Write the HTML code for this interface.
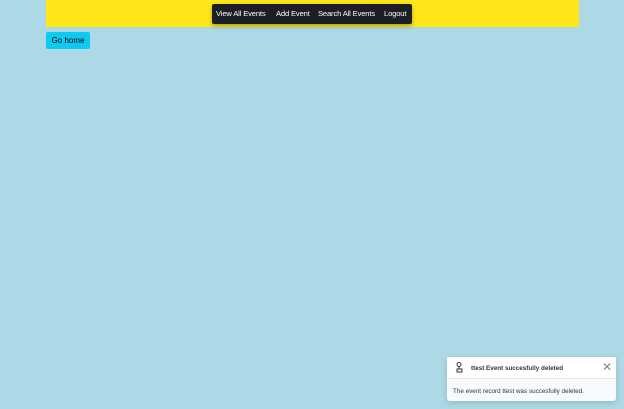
<!DOCTYPE html><html><head><style>
body{margin:0;width:624px;height:409px;background:#add8e6;font-family:"Liberation Sans",sans-serif;position:relative;overflow:hidden}
.bar{position:absolute;left:46px;top:0;width:533px;height:27px;background:#ffe619}
.nav{position:absolute;left:212px;top:4px;width:200px;height:20px;background:#1b1e24;border-radius:2px;box-shadow:0 2px 4px rgba(0,0,0,.3);color:#fff;font-size:7.6px;line-height:20px;white-space:nowrap;letter-spacing:-0.15px}
.nav span{position:absolute}
.btn{position:absolute;left:46px;top:32px;width:44px;height:17px;background:#0dcaf0;border-radius:2px;font-size:8px;line-height:18px;text-align:center;color:#000}
.toast{position:absolute;left:447px;top:357px;width:169px;height:44px;background:rgba(255,255,255,.9);border-radius:3px;box-shadow:0 2px 6px rgba(0,0,0,.15);font-size:6.3px;color:#333}
.th{height:21px;border-bottom:1px solid #e4e8ea;background:rgba(255,255,255,.95);position:relative}
</style></head><body>
<div class="bar"></div>
<div class="nav"><span style="left:4px">View All Events</span><span style="left:64px">Add Event</span><span style="left:106px">Search All Events</span><span style="left:172px">Logout</span></div>
<div class="btn">Go home</div>
<div class="toast"><div class="th">
<svg style="position:absolute;left:8px;top:5px" width="9" height="11" viewBox="0 0 9 11"><circle cx="4" cy="2.5" r="2" fill="none" stroke="#333"/><path d="M4 4.5V7M2 7h5v3H2z" fill="none" stroke="#333"/></svg>
<span style="position:absolute;left:24px;top:8px;font-weight:bold">ttest Event succesfully deleted</span>
<span style="position:absolute;right:4px;top:3px;font-size:12px;color:#888">✕</span></div>
<div style="padding:9px 0 0 6px">The event record ttest was succesfully deleted.</div></div>
</body></html>
